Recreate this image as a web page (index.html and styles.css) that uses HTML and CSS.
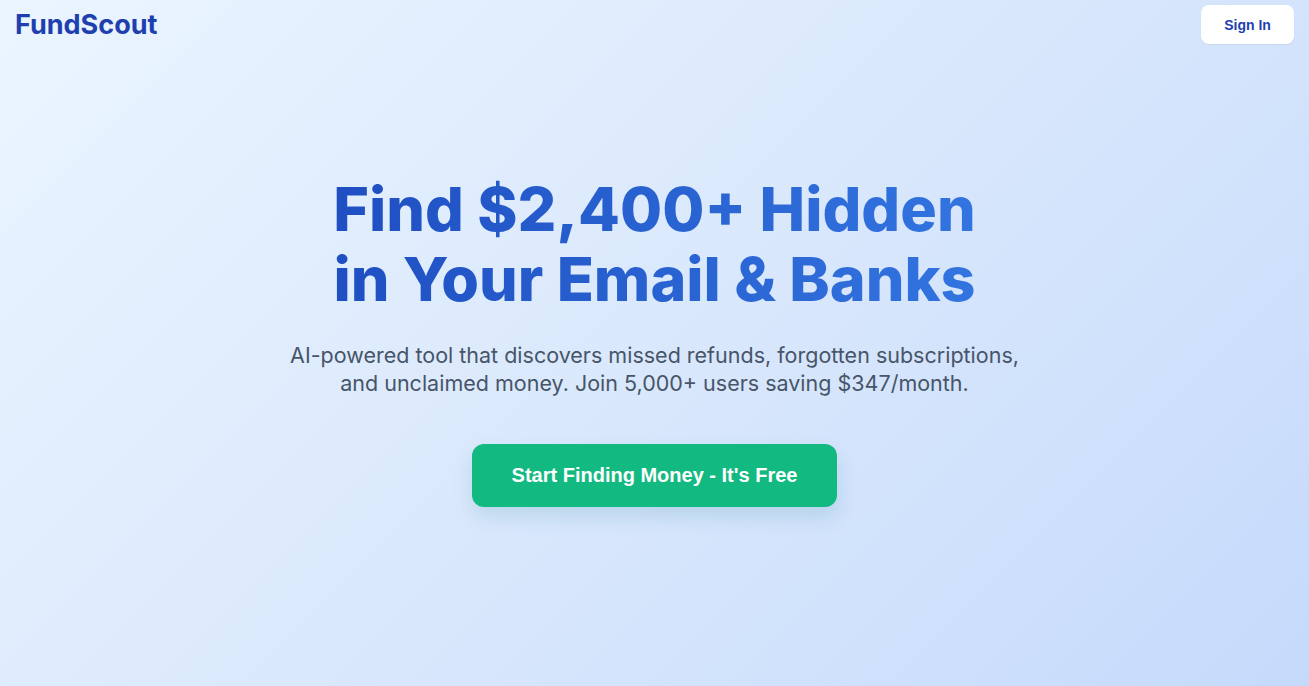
FILE: index.html
```html
<!DOCTYPE html>
<html lang="en">
<head>
<meta charset="utf-8">
<title>FundScout</title>
<link rel="stylesheet" href="styles.css">
</head>
<body>
<div class="page">
  <header class="topbar">
    <div class="logo">FundScout</div>
    <button class="signin">Sign In</button>
  </header>
  <main class="hero">
    <h1 class="title">Find $2,400+ Hidden<br>in Your Email &amp; Banks</h1>
    <p class="sub">AI-powered tool that discovers missed refunds, forgotten subscriptions,<br>and unclaimed money. Join 5,000+ users saving $347/month.</p>
    <button class="cta">Start Finding Money - It's Free</button>
  </main>
</div>
</body>
</html>
```
FILE: styles.css
```css
* { box-sizing: border-box; }
html, body { margin: 0; padding: 0; height: 100%; }
body { font-family: Inter, "Liberation Sans", sans-serif; }
.page {
  min-height: 686px;
  height: 100%;
  background: linear-gradient(135deg, #eaf5ff 0%, #dae8fc 50%, #c5dafb 100%);
  display: flex;
  flex-direction: column;
}
.topbar {
  display: flex;
  justify-content: space-between;
  align-items: flex-start;
  padding: 5px 15px 0 15px;
}
.logo {
  font-weight: 700;
  font-size: 27px;
  line-height: 32px;
  color: #1e40af;
  letter-spacing: 0;
  margin-top: 4px;
}
.signin {
  background: #ffffff;
  border: none;
  border-radius: 8px;
  width: 93px;
  height: 39px;
  font-family: "Liberation Sans", Arial, sans-serif;
  font-weight: 700;
  font-size: 14px;
  color: #1e40af;
  box-shadow: 0 1px 2px rgba(0,0,0,0.05);
}
.hero {
  display: flex;
  flex-direction: column;
  align-items: center;
  text-align: center;
  padding-top: 130px;
}
.title {
  margin: 0;
  font-size: 61px;
  font-weight: 800;
  line-height: 70px;
  letter-spacing: 0;
  background: linear-gradient(90deg, #1f4fc2, #3274e0);
  -webkit-background-clip: text;
  background-clip: text;
  color: transparent;
}
.sub {
  margin: 27px 0 0 0;
  font-size: 21.5px;
  line-height: 28px;
  color: #475569;
}
.cta {
  margin-top: 47px;
  width: 365px;
  height: 63px;
  border: none;
  border-radius: 12px;
  background: #12b981;
  color: #ffffff;
  font-family: "Liberation Sans", Arial, sans-serif;
  font-weight: 700;
  font-size: 20px;
  box-shadow: 0 10px 20px rgba(16, 120, 140, 0.15);
}
```
